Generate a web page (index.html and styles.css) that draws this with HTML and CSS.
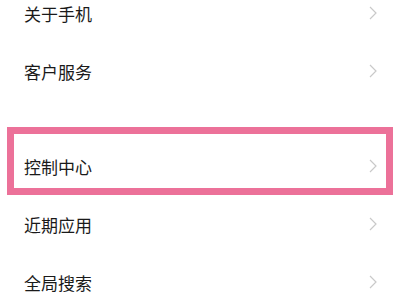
FILE: index.html
```
<!DOCTYPE html>
<html lang="zh-CN">
<head>
<meta charset="utf-8">
<link rel="stylesheet" href="styles.css">
</head>
<body>
<div class="list">
  <div class="row"><span class="label">关于手机</span><svg class="chev" viewBox="0 0 8 14"><path d="M1 1 L7 7 L1 13" /></svg></div>
  <div class="row"><span class="label">客户服务</span><svg class="chev" viewBox="0 0 8 14"><path d="M1 1 L7 7 L1 13" /></svg></div>
  <div class="gap"></div>
  <div class="row highlight"><span class="label">控制中心</span><svg class="chev" viewBox="0 0 8 14"><path d="M1 1 L7 7 L1 13" /></svg></div>
  <div class="row"><span class="label">近期应用</span><svg class="chev" viewBox="0 0 8 14"><path d="M1 1 L7 7 L1 13" /></svg></div>
  <div class="row"><span class="label">全局搜索</span><svg class="chev" viewBox="0 0 8 14"><path d="M1 1 L7 7 L1 13" /></svg></div>
</div>
</body>
</html>
```
FILE: styles.css
```
html, body {
  margin: 0;
  padding: 0;
  background: #ffffff;
  overflow: hidden;
}
body {
  width: 400px;
  height: 300px;
  font-family: "Noto Sans CJK SC", "Noto Sans", sans-serif;
}
.list {
  display: flex;
  flex-direction: column;
  margin-top: -16px;
}
.row {
  position: relative;
  height: 58px;
  display: flex;
  align-items: center;
  justify-content: space-between;
  padding: 0 23px 0 24px;
}
.gap {
  height: 37px;
}
.label {
  font-size: 17px;
  color: #1a1a1a;
  line-height: 1;
}
.chev {
  width: 8px;
  height: 14px;
  fill: none;
  stroke: #c9c9c9;
  stroke-width: 1.2;
}
.highlight::after {
  content: "";
  position: absolute;
  top: -10px;
  bottom: 0;
  left: 7px;
  right: 7px;
  border: 7px solid #ec7199;
  pointer-events: none;
}
```
